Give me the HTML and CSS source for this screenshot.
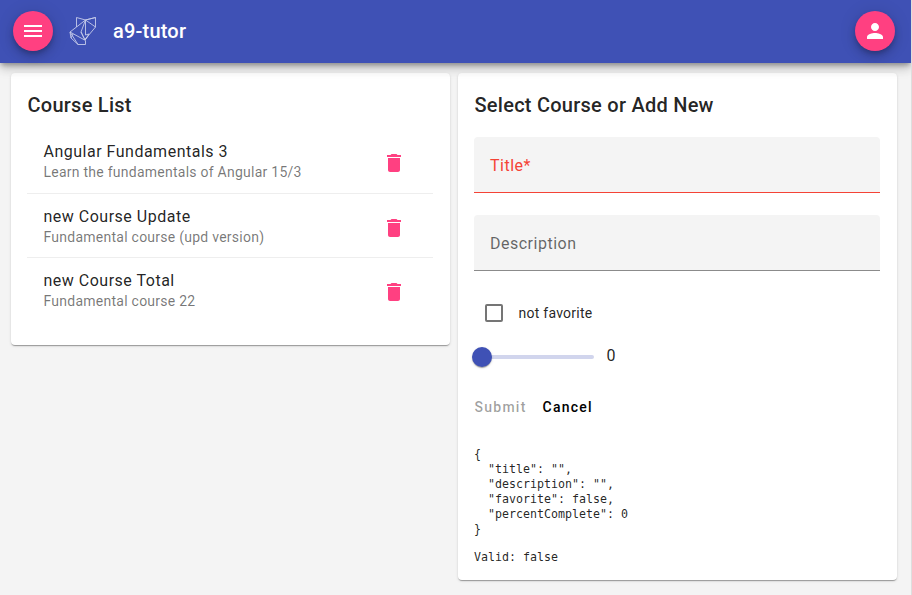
FILE: index.html
```html
<!DOCTYPE html>
<html lang="en">
<head>
<meta charset="utf-8">
<title>a9-tutor</title>
<link rel="stylesheet" href="styles.css">
</head>
<body>
<header class="toolbar">
  <button class="fab" aria-label="Menu"><svg viewBox="0 0 24 24"><path d="M3 18h18v-2H3v2zm0-5h18v-2H3v2zm0-7v2h18V6H3z"/></svg></button>
  <svg class="logo" viewBox="0 0 30 32"><path d="M7.500 2.500L16.500 5L26.500 2.500V12L19 21L15.500 25M7.500 2.500V12L16.500 5L26.500 12M16.500 5V20M7.500 12L1 17L2 23L9 29.500H16.500V25.500L1 17M16.500 5L12 17L16 25L19 21M26.500 2.500L16.500 5M1 17L9 29.500M2 23L4 19M12 17L14 21L16 25L20 19L16.500 20"/></svg>
  <h1 class="brand">a9-tutor</h1>
  <button class="fab account" aria-label="Account"><svg viewBox="0 0 24 24"><path d="M12 12c2.210 0 4-1.790 4-4s-1.790-4-4-4-4 1.790-4 4 1.790 4 4 4zm0 2c-2.670 0-8 1.340-8 4v2h16v-2c0-2.660-5.330-4-8-4z"/></svg></button>
</header>
<main class="content">
  <section class="card">
    <h2>Course List</h2>
    <ul class="courses">
      <li><div><p class="name">Angular Fundamentals 3</p><p class="info">Learn the fundamentals of Angular 15/3</p></div><svg class="trash" viewBox="0 0 24 24"><path d="M6 19c0 1.100.9 2 2 2h8c1.100 0 2-.9 2-2V7H6v12zM19 4h-3.500l-1-1h-5l-1 1H5v2h14V4z"/></svg></li>
      <li><div><p class="name">new Course Update</p><p class="info">Fundamental course (upd version)</p></div><svg class="trash" viewBox="0 0 24 24"><path d="M6 19c0 1.100.9 2 2 2h8c1.100 0 2-.9 2-2V7H6v12zM19 4h-3.500l-1-1h-5l-1 1H5v2h14V4z"/></svg></li>
      <li><div><p class="name">new Course Total</p><p class="info">Fundamental course 22</p></div><svg class="trash" viewBox="0 0 24 24"><path d="M6 19c0 1.100.9 2 2 2h8c1.100 0 2-.9 2-2V7H6v12zM19 4h-3.500l-1-1h-5l-1 1H5v2h14V4z"/></svg></li>
    </ul>
  </section>
  <section class="card editor">
    <h2>Select Course or Add New</h2>
    <div class="field invalid">Title*</div>
    <div class="field">Description</div>
    <div class="check"><span class="box"></span><span>not favorite</span></div>
    <div class="progress"><div class="slider"><span class="thumb"></span></div><span>0</span></div>
    <div class="actions"><span class="submit">Submit</span><span>Cancel</span></div>
    <pre>{
  "title": "",
  "description": "",
  "favorite": false,
  "percentComplete": 0
}</pre>
    <pre class="valid">Valid: false</pre>
  </section>
</main>
</body>
</html>
```
FILE: styles.css
```css
* { box-sizing: border-box; }
html { background: #dedede; overflow: hidden; }
body { margin: 0; width: 911px; height: 595px; background: #f4f4f4; color: rgba(0,0,0,.87); font-family: Roboto, sans-serif; overflow: hidden; }
h1, h2, p, ul, pre { margin: 0; padding: 0; }
.toolbar { position: relative; z-index: 2; height: 63px; padding: 0 16px 1px 13px; display: flex; align-items: center; background: #3f51b5; box-shadow: 0 3px 5px -1px rgba(0,0,0,.3), 0 6px 10px rgba(0,0,0,.15), 0 1px 14px rgba(0,0,0,.1); }
.fab { width: 40px; height: 40px; padding: 8px; border: 0; border-radius: 50%; background: #ff4081; box-shadow: 0 3px 5px -1px rgba(0,0,0,.2), 0 6px 10px rgba(0,0,0,.14), 0 1px 18px rgba(0,0,0,.12); }
.fab svg { display: block; width: 24px; height: 24px; fill: #fff; }
.account { margin-left: auto; }
.logo { width: 30px; height: 32px; margin-left: 16px; fill: none; stroke: #c5cbe9; stroke-width: .9; }
.brand { margin-left: 14px; font-size: 20px; line-height: 32px; font-weight: 500; letter-spacing: .2px; color: #fff; }
.content { display: flex; align-items: flex-start; gap: 8px; padding: 10px 14px 0 11px; }
.card { width: 439px; height: 272px; padding: 16px 17px 16px 16px; background: #fff; border-radius: 4px; box-shadow: 0 2px 1px -1px rgba(0,0,0,.2), 0 1px 1px rgba(0,0,0,.14), 0 1px 3px rgba(0,0,0,.12); }
.editor { height: 507px; }
h2 { padding-left: .5px; font-size: 20px; line-height: 32px; font-weight: 500; letter-spacing: .25px; }
.courses { list-style: none; padding-top: 10px; }
.courses li { display: flex; justify-content: space-between; height: 64px; padding: 11px 27.500px 0 16.500px; border-top: 1px solid #eee; }
.courses li:first-child { height: 62px; padding-top: 9px; border-top: 0; }
.name { font-size: 16px; line-height: 24px; letter-spacing: .5px; }
.info { margin-top: -1px; font-size: 14px; line-height: 18px; letter-spacing: .25px; color: rgba(0,0,0,.54); }
.trash { width: 24px; height: 24px; margin-top: 11px; fill: #ff4081; }
.field { height: 56px; padding: 0 16px; background: #f4f4f4; border-bottom: 1px solid #8b8b8b; border-radius: 4px 4px 0 0; color: rgba(0,0,0,.6); font-size: 16px; line-height: 58px; letter-spacing: .5px; }
.invalid { margin: 16px 0 22px; border-color: #f44336; color: #f44336; }
.check { display: flex; align-items: center; gap: 15.500px; margin: 32px 0 0 11px; height: 20px; font-size: 14px; letter-spacing: .25px; }
.box { width: 18px; height: 18px; border: 2px solid #757575; border-radius: 2px; }
.progress { display: flex; align-items: center; gap: 12.500px; height: 24px; margin: 20px 0 0 8px; font-size: 16px; }
.slider { width: 112px; height: 4px; margin-top: 3px; background: #d1d5ed; border-radius: 2px; display: flex; align-items: center; }
.thumb { flex: none; width: 20px; height: 20px; margin-left: -10px; border-radius: 50%; background: #3f51b5; box-shadow: 0 2px 1px -1px rgba(0,0,0,.2), 0 1px 1px rgba(0,0,0,.14), 0 1px 3px rgba(0,0,0,.12); }
.actions { display: flex; gap: 16px; height: 36px; margin: 22px 0 22px; padding-left: .5px; align-items: center; color: #000; font-size: 14px; font-weight: 500; letter-spacing: 1.25px; }
.submit { color: rgba(0,0,0,.38); }
pre { font: 11.63px/15px "DejaVu Sans Mono", monospace; }
.valid { margin-top: 13px; }
```
